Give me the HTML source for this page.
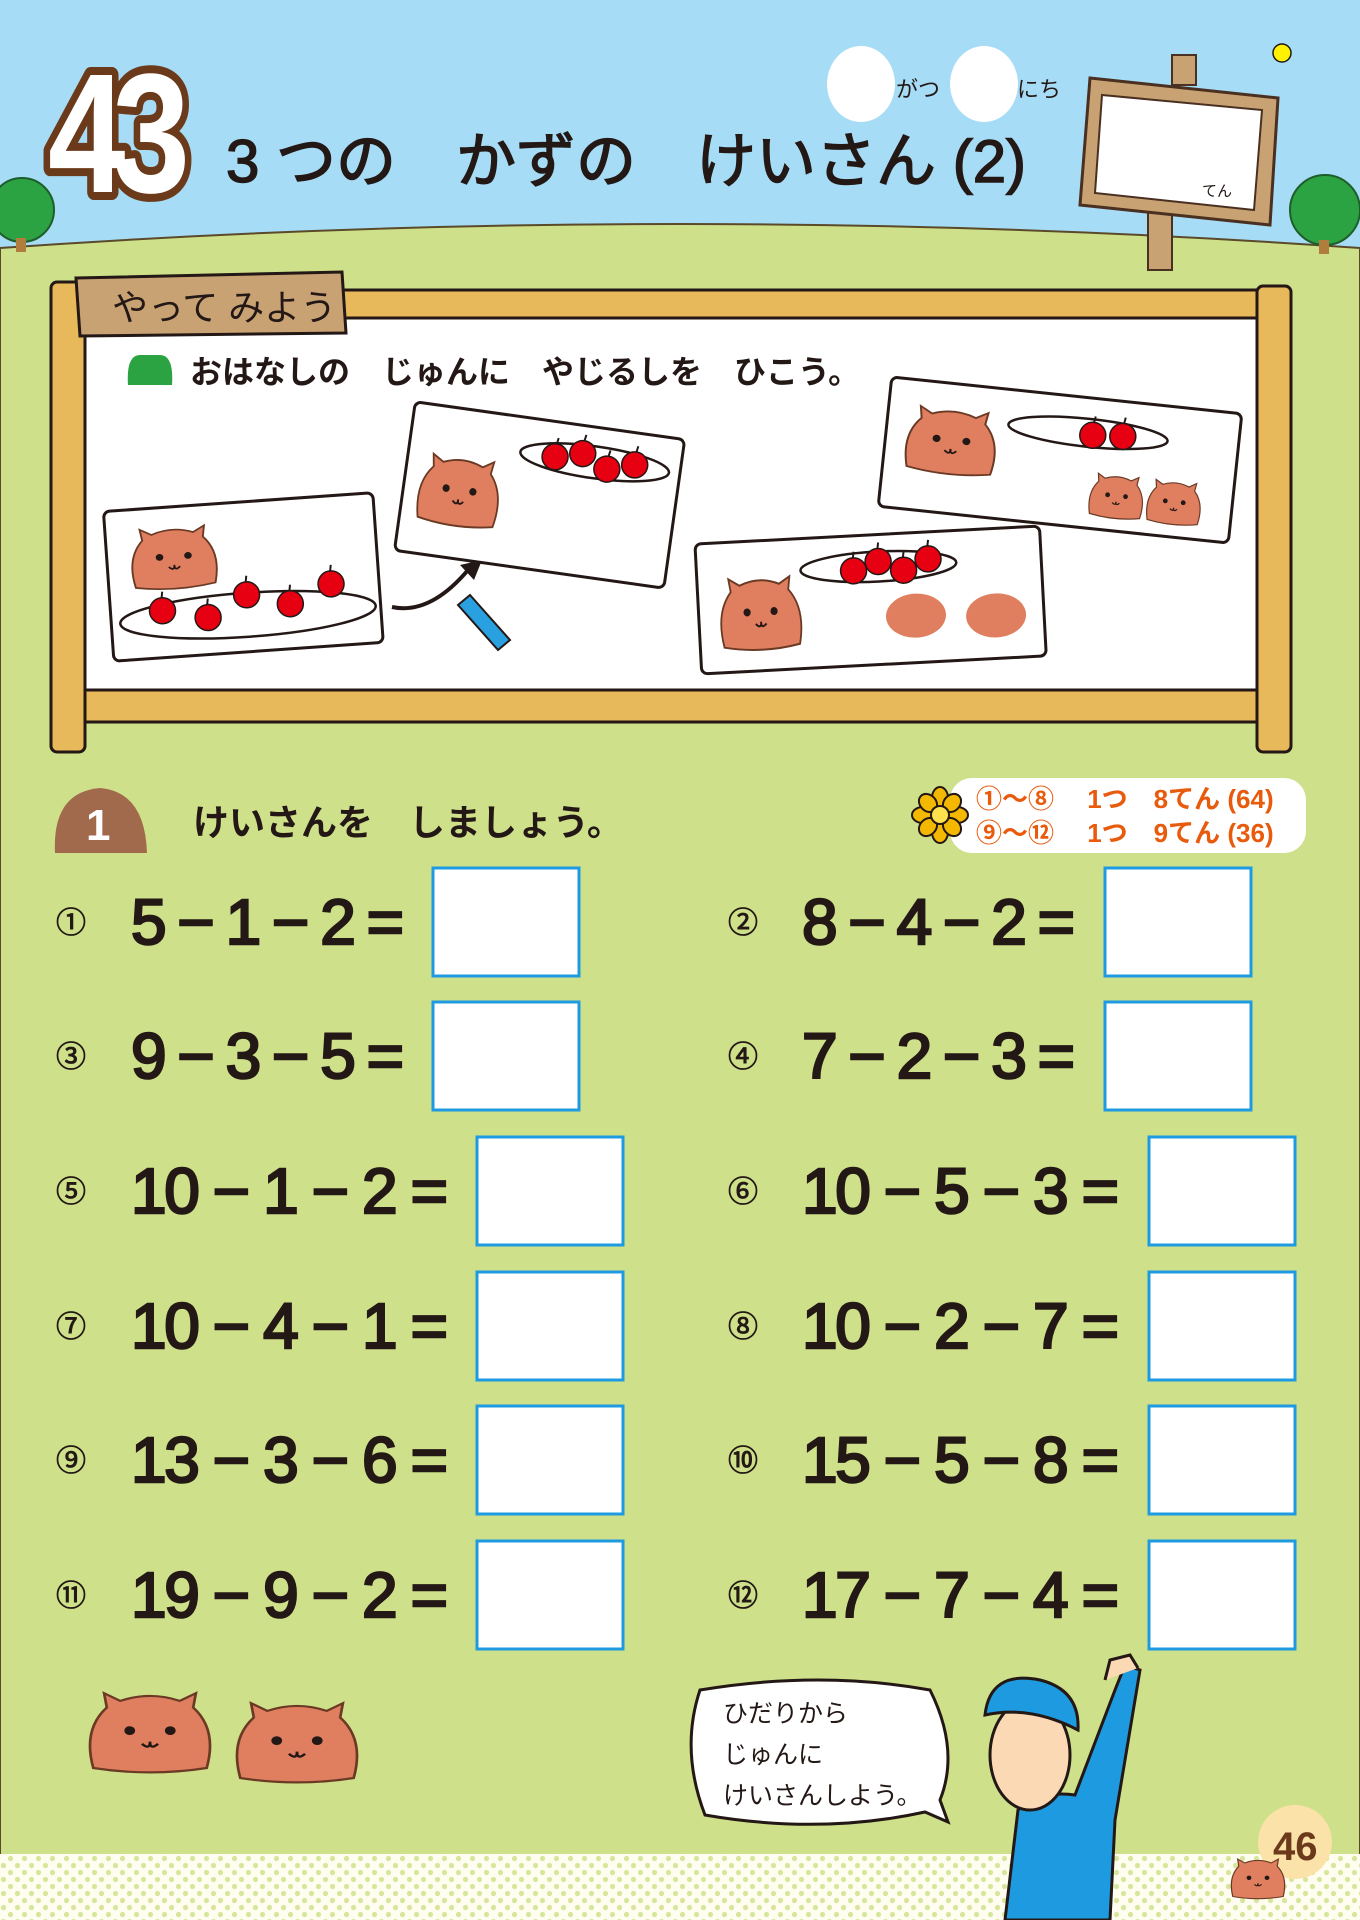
<!DOCTYPE html>
<html><head><meta charset="utf-8"><style>
html,body{margin:0;padding:0;width:1360px;height:1920px;overflow:hidden;background:#cfe08a}
svg{display:block}
text{font-family:"Liberation Sans","Noto Sans CJK JP",sans-serif}
</style></head><body>
<svg width="1360" height="1920" viewBox="0 0 1360 1920" xmlns="http://www.w3.org/2000/svg">
<defs>
<pattern id="dots" width="14" height="14" patternUnits="userSpaceOnUse">
<rect width="14" height="14" fill="#fffdf0"/><circle cx="3.5" cy="3.5" r="2.6" fill="#d6e69b"/><circle cx="10.5" cy="10.5" r="2.6" fill="#d6e69b"/></pattern>
<g id="capy"><path d="M-42 30 Q-50 -5 -32 -25 L-34 -38 L-22 -31 Q0 -40 22 -31 L34 -38 L32 -25 Q50 -5 42 30 Q0 38 -42 30Z" fill="#e07f5f" stroke="#6b3a25" stroke-width="2"/><circle cx="-15" cy="-4" r="4" fill="#231815"/><circle cx="15" cy="-4" r="4" fill="#231815"/><path d="M-6 8 Q0 14 0 6 Q0 14 6 8" fill="none" stroke="#231815" stroke-width="2"/></g>
<g id="apple"><circle r="13" fill="#e60012" stroke="#231815" stroke-width="1.5"/><path d="M0 -13 L1 -19" stroke="#231815" stroke-width="2"/></g>
</defs>
<rect width="1360" height="300" fill="#a6dcf5"/>
<path d="M0 248 Q680 200 1360 248 L1360 1920 L0 1920Z" fill="#cfe08a" stroke="#5a4a2a" stroke-width="2"/>
<circle cx="22" cy="210" r="32" fill="#2ca343" stroke="#1f5d2a" stroke-width="2"/><rect x="16" y="238" width="10" height="14" fill="#b07d3c"/>
<circle cx="1325" cy="210" r="35" fill="#2ca343" stroke="#1f5d2a" stroke-width="2"/><rect x="1319" y="240" width="10" height="14" fill="#b07d3c"/>
<text x="48" y="192" font-size="170" font-weight="bold" fill="#fff" stroke="#6b3a1a" stroke-width="16" stroke-linejoin="round" paint-order="stroke" letter-spacing="-16" transform="translate(48 0) scale(0.82 1) translate(-48 0)">43</text>
<text x="226" y="182" font-size="60" fill="#231815" stroke="#231815" stroke-width="1.5">3 つの　かずの　けいさん (2)</text>
<ellipse cx="861" cy="84" rx="34" ry="38" fill="#fff"/><ellipse cx="984" cy="84" rx="34" ry="38" fill="#fff"/>
<text x="896" y="97" font-size="22" fill="#231815">がつ</text><text x="1017" y="97" font-size="22" fill="#231815">にち</text>
<circle cx="1282" cy="53" r="9" fill="#fff200" stroke="#231815" stroke-width="1.5"/>
<rect x="1148" y="210" width="24" height="60" fill="#c9a273" stroke="#4a3020" stroke-width="2"/>
<rect x="1172" y="55" width="24" height="30" fill="#c9a273" stroke="#4a3020" stroke-width="2"/>
<path d="M1090 78 L1278 98 L1270 225 L1080 205Z" fill="#c9a273" stroke="#4a3020" stroke-width="3"/>
<path d="M1102 95 L1262 110 L1254 210 L1095 193Z" fill="#fff" stroke="#4a3020" stroke-width="2"/>
<text x="1202" y="196" font-size="15" fill="#231815">てん</text>
<rect x="60" y="290" width="1216" height="32" fill="#e8b95a" stroke="#231815" stroke-width="3"/>
<rect x="82" y="318" width="1180" height="374" fill="#fff" stroke="#231815" stroke-width="3"/>
<rect x="60" y="690" width="1216" height="32" fill="#e8b95a" stroke="#231815" stroke-width="3"/>
<rect x="51" y="282" width="34" height="470" rx="6" fill="#e8b95a" stroke="#231815" stroke-width="3"/>
<rect x="1257" y="286" width="34" height="466" rx="6" fill="#e8b95a" stroke="#231815" stroke-width="3"/>
<path d="M76 278 L342 272 L346 333 L80 336Z" fill="#c9a273" stroke="#231815" stroke-width="3"/>
<text x="112" y="320" font-size="36" fill="#231815">やって みよう</text>
<path d="M128 385 Q126 355 140 355 L160 355 Q174 355 172 385Z" fill="#2ca343"/>
<text x="190" y="383" font-size="32" font-weight="bold" fill="#231815">おはなしの　じゅんに　やじるしを　ひこう。</text>
<g transform="rotate(-4 243 572)"><rect x="108" y="502" width="270" height="150" rx="6" fill="#fff" stroke="#231815" stroke-width="3"/>
<use href="#capy" transform="translate(175 555) scale(0.95 0.85)"/><ellipse cx="245" cy="615" rx="128" ry="22" fill="none" stroke="#231815" stroke-width="2.5"/>
<use href="#apple" x="160" y="605"/><use href="#apple" x="205" y="615"/><use href="#apple" x="245" y="595"/><use href="#apple" x="288" y="607"/><use href="#apple" x="330" y="590"/></g>
<path d="M392 607 Q430 615 468 570" fill="none" stroke="#231815" stroke-width="4"/><path d="M460 565 L482 560 L474 580Z" fill="#231815"/>
<path d="M470 595 L510 640 L498 650 L458 605Z" fill="#29a0e0" stroke="#231815" stroke-width="2"/>
<g transform="rotate(8 540 492)"><rect x="404" y="420" width="272" height="150" rx="6" fill="#fff" stroke="#231815" stroke-width="3"/>
<use href="#capy" transform="translate(460 505) scale(0.9 0.95)"/><ellipse cx="590" cy="455" rx="75" ry="16" fill="none" stroke="#231815" stroke-width="2.5"/>
<use href="#apple" x="550" y="455"/><use href="#apple" x="577" y="448"/><use href="#apple" x="603" y="460"/><use href="#apple" x="630" y="452"/></g>
<g transform="rotate(-3 870 598)"><rect x="698" y="535" width="345" height="130" rx="6" fill="#fff" stroke="#231815" stroke-width="3"/>
<use href="#capy" transform="translate(760 610) scale(0.9 1)"/><ellipse cx="880" cy="567" rx="78" ry="15" fill="none" stroke="#231815" stroke-width="2.5"/>
<use href="#apple" x="855" y="570"/><use href="#apple" x="880" y="562"/><use href="#apple" x="905" y="572"/><use href="#apple" x="930" y="562"/>
<ellipse cx="915" cy="618" rx="30" ry="22" fill="#e07f5f"/><ellipse cx="995" cy="622" rx="30" ry="22" fill="#e07f5f"/></g>
<g transform="rotate(6 1060 460)"><rect x="884" y="395" width="352" height="130" rx="6" fill="#fff" stroke="#231815" stroke-width="3"/>
<use href="#capy" transform="translate(950 455) scale(1 0.9)"/><ellipse cx="1085" cy="430" rx="80" ry="14" fill="none" stroke="#231815" stroke-width="2.5"/>
<use href="#apple" x="1090" y="432"/><use href="#apple" x="1120" y="430"/>
<use href="#capy" transform="translate(1120 492) scale(0.6 0.6)"/><use href="#capy" transform="translate(1178 492) scale(0.6 0.6)"/></g>
<path d="M55 853 Q52 792 100 788 Q145 792 147 853Z" fill="#a26a4c"/>
<text x="86" y="840" font-size="44" font-weight="bold" fill="#fff">1</text>
<text x="193" y="835" font-size="36" font-weight="bold" fill="#231815">けいさんを　しましょう。</text>
<rect x="950" y="778" width="356" height="75" rx="22" fill="#fff"/>
<g transform="translate(940 815)" stroke="#231815" stroke-width="2" fill="#f5b800">
<ellipse cx="0" cy="-17" rx="8" ry="11"/><ellipse cx="0" cy="17" rx="8" ry="11"/><ellipse cx="-17" cy="0" rx="11" ry="8"/><ellipse cx="17" cy="0" rx="11" ry="8"/>
<ellipse cx="-12" cy="-12" rx="8" ry="10" transform="rotate(-45 -12 -12)"/><ellipse cx="12" cy="12" rx="8" ry="10" transform="rotate(-45 12 12)"/><ellipse cx="12" cy="-12" rx="8" ry="10" transform="rotate(45 12 -12)"/><ellipse cx="-12" cy="12" rx="8" ry="10" transform="rotate(45 -12 12)"/>
<circle r="9" fill="#ffe14d"/></g>
<g font-size="26" fill="#e85a0c" font-weight="bold"><text x="976" y="808">①〜⑧　 1つ　8てん (64)</text><text x="976" y="842">⑨〜⑫　 1つ　9てん (36)</text></g>
<g font-size="64" fill="#231815" stroke="#231815" stroke-width="2.5">
<g font-size="30" stroke-width="0.8">
<text x="56" y="933">①</text><text x="56" y="1067">③</text><text x="56" y="1202">⑤</text><text x="56" y="1337">⑦</text><text x="56" y="1471">⑨</text><text x="56" y="1606">⑪</text>
<text x="728" y="933">②</text><text x="728" y="1067">④</text><text x="728" y="1202">⑥</text><text x="728" y="1337">⑧</text><text x="728" y="1471">⑩</text><text x="728" y="1606">⑫</text></g>
<text x="131" y="944" textLength="273" lengthAdjust="spacing">5 − 1 − 2 =</text>
<text x="131" y="1078" textLength="273" lengthAdjust="spacing">9 − 3 − 5 =</text>
<text x="131" y="1213" textLength="317" lengthAdjust="spacing">10 − 1 − 2 =</text>
<text x="131" y="1348" textLength="317" lengthAdjust="spacing">10 − 4 − 1 =</text>
<text x="131" y="1482" textLength="317" lengthAdjust="spacing">13 − 3 − 6 =</text>
<text x="131" y="1617" textLength="317" lengthAdjust="spacing">19 − 9 − 2 =</text>
<text x="802" y="944" textLength="273" lengthAdjust="spacing">8 − 4 − 2 =</text>
<text x="802" y="1078" textLength="273" lengthAdjust="spacing">7 − 2 − 3 =</text>
<text x="802" y="1213" textLength="317" lengthAdjust="spacing">10 − 5 − 3 =</text>
<text x="802" y="1348" textLength="317" lengthAdjust="spacing">10 − 2 − 7 =</text>
<text x="802" y="1482" textLength="317" lengthAdjust="spacing">15 − 5 − 8 =</text>
<text x="802" y="1617" textLength="317" lengthAdjust="spacing">17 − 7 − 4 =</text>
</g>
<g fill="#fff" stroke="#1e9be0" stroke-width="3">
<rect x="433" y="868" width="146" height="108"/><rect x="433" y="1002" width="146" height="108"/>
<rect x="477" y="1137" width="146" height="108"/><rect x="477" y="1272" width="146" height="108"/><rect x="477" y="1406" width="146" height="108"/><rect x="477" y="1541" width="146" height="108"/>
<rect x="1105" y="868" width="146" height="108"/><rect x="1105" y="1002" width="146" height="108"/>
<rect x="1149" y="1137" width="146" height="108"/><rect x="1149" y="1272" width="146" height="108"/><rect x="1149" y="1406" width="146" height="108"/><rect x="1149" y="1541" width="146" height="108"/>
</g>
<rect x="0" y="1854" width="1360" height="66" fill="url(#dots)"/>
<use href="#capy" transform="translate(150 1735) scale(1.35 1.1)"/><use href="#capy" transform="translate(297 1745) scale(1.35 1.1)"/>
<path d="M700 1690 Q820 1670 930 1690 Q960 1750 940 1800 L948 1822 L925 1812 Q820 1835 705 1815 Q680 1750 700 1690Z" fill="#fff" stroke="#231815" stroke-width="3"/>
<g font-size="25" fill="#231815"><text x="723" y="1722">ひだりから</text><text x="723" y="1763">じゅんに</text><text x="723" y="1804">けいさんしよう。</text></g>
<path d="M1005 1920 L1018 1810 Q1040 1790 1075 1795 L1115 1690 L1125 1665 L1140 1670 L1115 1820 L1110 1920Z" fill="#1e9be0" stroke="#231815" stroke-width="3"/>
<ellipse cx="1030" cy="1755" rx="40" ry="55" fill="#fbd9b4" stroke="#231815" stroke-width="3"/>
<path d="M985 1715 Q990 1670 1040 1680 Q1080 1690 1078 1730 Q1030 1705 985 1715Z" fill="#1e9be0" stroke="#231815" stroke-width="3"/>
<path d="M1105 1680 L1110 1660 L1130 1655 L1138 1668" fill="#fbd9b4" stroke="#231815" stroke-width="3"/>
<circle cx="1295" cy="1842" r="37" fill="#fbe2a8"/>
<text x="1273" y="1860" font-size="40" font-weight="bold" fill="#6b3a1a">46</text>
<use href="#capy" transform="translate(1258 1880) scale(0.6 0.55)"/>
</svg>
</body></html>
